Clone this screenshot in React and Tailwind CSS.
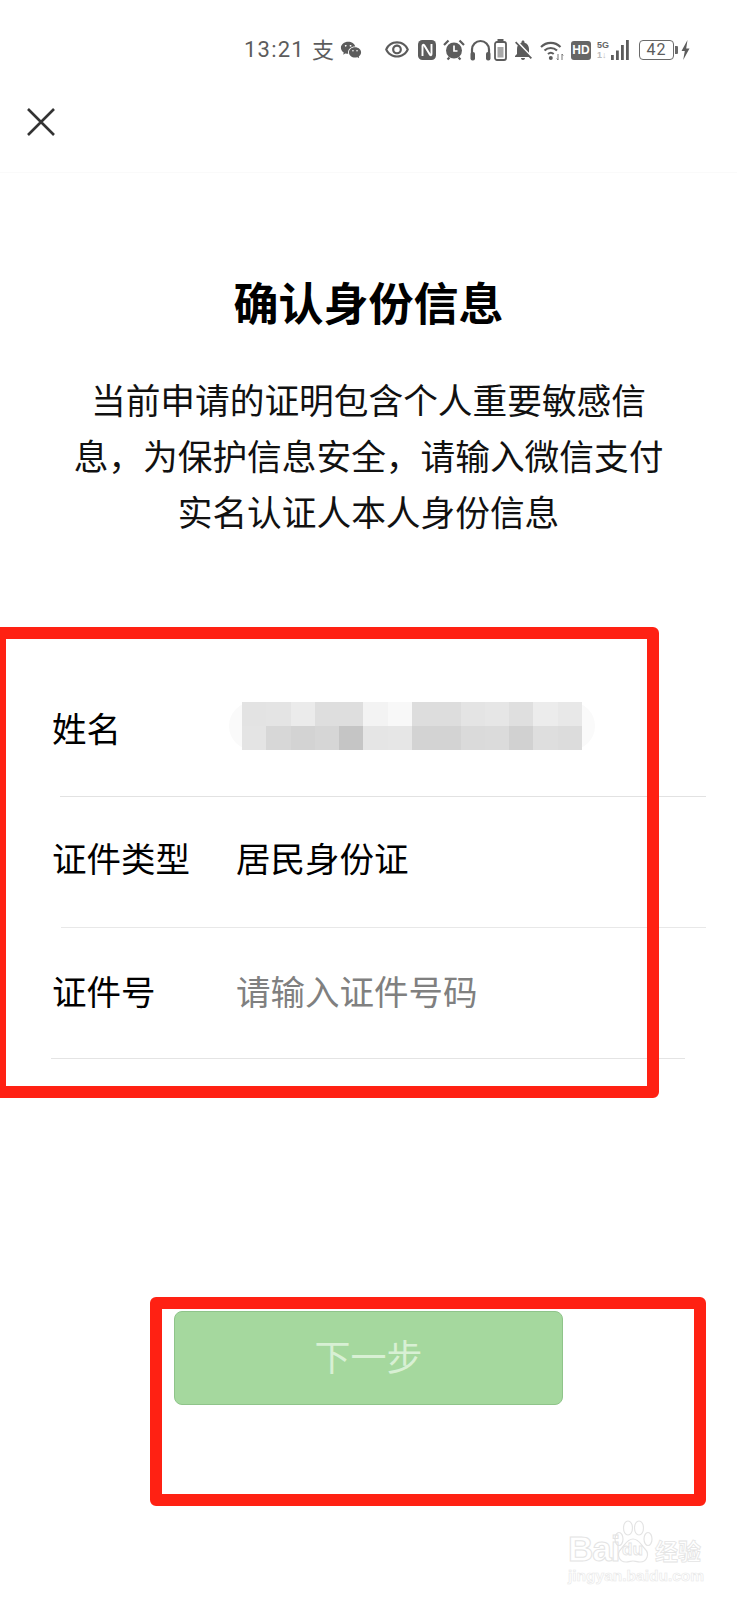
import React from "react";
import { RiWechatFill } from "react-icons/ri";
import { MdOutlineVisibility, MdNotificationsOff } from "react-icons/md";

const row1 = ["bg-[#e3e3e3]","bg-[#e4e4e4]","bg-[#ebebeb]","bg-[#dedede]","bg-[#dedede]","bg-[#f3f3f3]","bg-[#f8f8f8]","bg-[#dddddd]","bg-[#dddddd]","bg-[#e4e4e4]","bg-[#e6e6e6]","bg-[#dfdfdf]","bg-[#ececec]","bg-[#e8e8e8]"];
const row2 = ["bg-[#e4e4e4]","bg-[#d7d7d7]","bg-[#d3d3d3]","bg-[#d6d6d6]","bg-[#c5c5c5]","bg-[#e5e5e5]","bg-[#e6e6e6]","bg-[#d3d3d3]","bg-[#d3d3d3]","bg-[#dadada]","bg-[#dbdbdb]","bg-[#d1d1d1]","bg-[#dedede]","bg-[#dcdcdc]"];

const font = "font-['Noto_Sans_CJK_SC','Noto_Sans',sans-serif]";

function Nfc() {
  return (
    <svg width="18" height="20" viewBox="0 0 18 20" className="ml-[8px]">
      <rect x="0" y="0" width="18" height="20" rx="4.5" fill="#5c5c5c" />
      <path d="M4.5 16V6c0-1.2.9-1.5 1.7-.8L12 14.800c.8.7 1.500.4 1.500-.8V4" fill="none" stroke="#fff" strokeWidth="1.900" />
    </svg>
  );
}
function Alarm() {
  return (
    <svg width="22" height="22" viewBox="0 0 22 22" className="ml-[7px]">
      <circle cx="11" cy="11.500" r="8" fill="#5c5c5c" />
      <path d="M1 6 5.500 1.500M21 6 16.500 1.500M4.500 20.500l2-2M17.500 20.500l-2-2" stroke="#5c5c5c" strokeWidth="2.200" fill="none" />
      <path d="M11 6.500V12H14.500" stroke="#fff" strokeWidth="1.700" fill="none" />
    </svg>
  );
}
function Headphones() {
  return (
    <svg width="21" height="22" viewBox="0 0 21 22" className="ml-[5px]">
      <path d="M2 15V10.500a8.500 8.500 0 0 1 17 0V15" fill="none" stroke="#5c5c5c" strokeWidth="2.200" />
      <rect x="0.500" y="13" width="4.500" height="8.500" rx="2" fill="#5c5c5c" />
      <rect x="16" y="13" width="4.500" height="8.500" rx="2" fill="#5c5c5c" />
    </svg>
  );
}
function BatteryV() {
  return (
    <svg width="13" height="22" viewBox="0 0 13 22" className="ml-[3px]">
      <rect x="3.500" y="0" width="6" height="2.200" fill="#5c5c5c" />
      <rect x="1" y="3" width="11" height="18" rx="2" fill="none" stroke="#5c5c5c" strokeWidth="1.800" />
      <rect x="3.500" y="8" width="6" height="10.500" fill="#a8a8a8" />
    </svg>
  );
}
function Wifi() {
  return (
    <svg width="25" height="21" viewBox="0 0 25 21" className="ml-[5px]">
      <path d="M1 7C6.500 1.500 15 1.500 20.500 7M4.500 10.500c3.500-3.300 9-3.300 12.500 0M8 14c1.700-1.500 4-1.500 5.700 0" fill="none" stroke="#5c5c5c" strokeWidth="2.100" />
      <circle cx="10.800" cy="18" r="2" fill="#5c5c5c" />
      <path d="M18 14v6M22 14v6M16.800 18.500 18 20M23.200 15.500 22 14" stroke="#777" strokeWidth="1" fill="none" />
    </svg>
  );
}
function Signal() {
  return (
    <svg width="18" height="20" viewBox="0 0 18 20" className="ml-[2px]">
      <rect x="0" y="15" width="2.800" height="5" fill="#5c5c5c" />
      <rect x="5" y="10.500" width="2.800" height="9.500" fill="#5c5c5c" />
      <rect x="10" y="5" width="2.800" height="15" fill="#5c5c5c" />
      <rect x="15" y="0" width="2.800" height="20" fill="#5c5c5c" />
    </svg>
  );
}
function Bolt() {
  return (
    <svg width="9" height="20" viewBox="0 0 9 20" className="ml-[3px]">
      <path d="M6.500 0 0.500 11H3.800L2.200 20 8.500 8.500H5.200Z" fill="#5c5c5c" />
    </svg>
  );
}

function StatusBar() {
  return (
    <div className={`flex h-[100px] items-center pl-[244px] text-[#5c5c5c] ${font}`}>
      <span className="w-[58px] font-['Roboto',sans-serif] text-[22px] leading-none tracking-[1.2px]">13:21</span>
      <span className="-mt-[4px] ml-[10px] w-[22px] text-[22px] leading-none">支</span>
      <RiWechatFill className="ml-[6px]" size={22} color="#5c5c5c" />
      <MdOutlineVisibility className="ml-[22px]" size={26} color="#5c5c5c" />
      <Nfc />
      <Alarm />
      <Headphones />
      <BatteryV />
      <MdNotificationsOff className="ml-[4px]" size={24} color="#5c5c5c" />
      <Wifi />
      <span className="ml-[6px] flex h-[19px] w-[20px] items-center justify-center rounded-[3px] bg-[#666] font-['Liberation_Sans',sans-serif] text-[12px] font-bold leading-none text-white">HD</span>
      <span className="ml-[6px] flex h-[20px] w-[12px] flex-col font-['Liberation_Sans',sans-serif] text-[9px] font-bold leading-[10px] text-[#666]">
        <span>5G</span>
        <span className="text-[#bbb]">1↓</span>
      </span>
      <Signal />
      <span className="ml-[10px] flex h-[20px] w-[35px] items-center justify-center rounded-[4px] border border-[#6a6a6a] font-['Roboto',sans-serif] text-[16px] leading-none tracking-[1px]">42</span>
      <span className="ml-[1px] h-[8px] w-[3px] rounded-r-[1px] bg-[#6a6a6a]" />
      <Bolt />
    </div>
  );
}

function Field({ label, children, h = "h-[130px]", pb = "pb-[6px]" }) {
  return (
    <div className={`flex ${h} ${pb} items-center pl-[52px] text-[34.5px] leading-[46px] text-black`}>
      <span className="w-[184px] shrink-0">{label}</span>
      {children}
    </div>
  );
}

function Mosaic() {
  return (
    <div className="relative h-[48px] w-[366px] rounded-full bg-[#fafafa]">
      <div className="absolute left-[13px] top-0 grid h-[48px] w-[340px] grid-cols-[repeat(14,1fr)] grid-rows-2">
        {row1.map((c, i) => <div key={`a${i}`} className={c} />)}
        {row2.map((c, i) => <div key={`b${i}`} className={c} />)}
      </div>
    </div>
  );
}

function Paw() {
  return (
    <svg width="40" height="44" viewBox="0 0 40 44" className="absolute left-0 top-0" fill="none" stroke="#e4e4e4" strokeWidth="1.200">
      <ellipse cx="6" cy="19" rx="4" ry="6.500" />
      <ellipse cx="15" cy="8" rx="4.500" ry="7" />
      <ellipse cx="26" cy="8" rx="4.500" ry="7" />
      <ellipse cx="35" cy="19" rx="4" ry="6.500" />
      <path d="M20 19c-6 0-8 6-12 10-5 5-2 13 5 13 3 0 5-1 7-1s4 1 7 1c7 0 10-8 5-13-4-4-6-10-12-10Z" />
    </svg>
  );
}

function Watermark() {
  return (
    <div className="absolute left-[568px] top-[1520px] w-[134px] font-['Liberation_Sans',sans-serif] text-transparent">
      <div className="flex h-[44px] items-end">
        <span className="w-[45px] text-[35px] font-bold leading-[30px] tracking-[-1px] [-webkit-text-stroke:1px_#e4e4e4]">Bai</span>
        <span className="relative h-[44px] w-[40px] shrink-0">
          <Paw />
          <span className="absolute bottom-[6px] left-[9px] text-[17px] font-bold leading-none [-webkit-text-stroke:0.800px_#e4e4e4]">du</span>
        </span>
        <span className={`ml-[2px] whitespace-nowrap text-[23px] font-bold leading-[28px] ${font} [-webkit-text-stroke:0.800px_#e4e4e4]`}>经验</span>
      </div>
      <div className="mt-[3px] whitespace-nowrap text-[15.500px] font-bold leading-[17px] [-webkit-text-stroke:0.600px_#e8e8e8]">jingyan.baidu.com</div>
    </div>
  );
}

export default function App() {
  return (
    <div className={`relative h-[1600px] w-[737px] overflow-hidden bg-white ${font}`}>
      <header className="h-[173px] border-b border-[#fafafa]">
        <StatusBar />
        <div className="flex h-[72px] items-start pl-[27px] pt-[8px]">
          <svg width="28" height="28" viewBox="0 0 28 28">
            <path d="M1 1 27 27M27 1 1 27" stroke="#333" strokeWidth="2.600" fill="none" />
          </svg>
        </div>
      </header>

      <h1 className="mt-[99px] text-center text-[45px] font-bold leading-[60px] text-black">确认身份信息</h1>
      <p className="mt-[39px] text-center text-[34.700px] leading-[56px] text-[#111]">
        当前申请的证明包含个人重要敏感信<br />
        息，为保护信息安全，请输入微信支付<br />
        实名认证人本人身份信息
      </p>

      <div className="mt-[126px]">
        <Field label="姓名" h="h-[131px]" pb="pb-[7px]"><div className="-mt-[2px] -ml-[7px]"><Mosaic /></div></Field>
        <div className="ml-[60px] h-px w-[646px] bg-[#e2e2e2]" />
        <Field label="证件类型" pb="pb-[10px]">居民身份证</Field>
        <div className="ml-[61px] h-px w-[645px] bg-[#e8e8e8]" />
        <Field label="证件号" pb="pb-[7px]"><span className="text-[#808080]">请输入证件号码</span></Field>
        <div className="ml-[51px] h-px w-[634px] bg-[#e4e4e4]" />
      </div>

      <button className="ml-[174px] mt-[252px] flex h-[94px] w-[389px] items-center justify-center rounded-[8px] border border-[#8fc48a] bg-[#a5d89e] pb-[6px] text-[36px] leading-[50px] text-[#d8f0d4]">
        下一步
      </button>

      <div className="absolute -left-[6px] top-[627px] h-[471px] w-[665px] rounded-[6px] border-[12px] border-[#ff2113]" />
      <div className="absolute left-[150px] top-[1297px] h-[209px] w-[556px] rounded-[6px] border-[12px] border-[#ff2113]" />
      <Watermark />
    </div>
  );
}
